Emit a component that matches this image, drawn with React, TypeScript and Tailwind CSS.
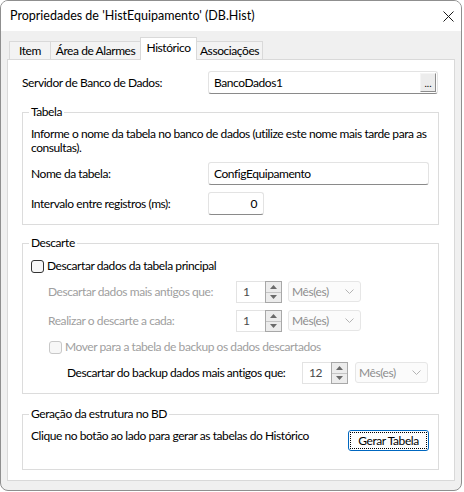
import React from "react";

function Spin({ value }: { value: string }) {
  return (
    <div className="flex w-[46px] h-[22px]">
      <div className="flex-1 bg-white border border-r-0 border-[#e3e3e3] pl-[6px] leading-[20px] text-[#4a4a4a]">{value}</div>
      <div className="w-[17px] flex flex-col border border-[#a8a8a8] bg-[#ececec]">
        <div className="flex-1 flex items-center justify-center border-b border-[#c4c4c4]">
          <svg width="7" height="4" viewBox="0 0 7 4"><path d="M0 4 L3.5 0 L7 4 Z" fill="#6a6a6a" /></svg>
        </div>
        <div className="flex-1 flex items-center justify-center">
          <svg width="7" height="4" viewBox="0 0 7 4"><path d="M0 0 L3.5 4 L7 0 Z" fill="#6a6a6a" /></svg>
        </div>
      </div>
    </div>
  );
}

function Combo() {
  return (
    <div className="w-[73px] h-[21px] border border-[#e6e6e6] bg-[#fbfbfb] rounded-[3px] flex items-center justify-between pl-[3px] pr-[6px]">
      <span className="text-[#8e8e8e] leading-[16px]">Mês(es)</span>
      <svg width="9" height="5" viewBox="0 0 9 5"><path d="M0.5 0.5 L4.5 4.5 L8.5 0.5" fill="none" stroke="#b4b4b4" strokeWidth="1" /></svg>
    </div>
  );
}

export default function App() {
  const field = "bg-white border border-[#e3e3e3] border-b-[#8a8a8a] rounded-[3px]";
  return (
    <div className="w-[464px] h-[492px] bg-white font-['Lato',sans-serif] text-[12px] tracking-[-0.43px] leading-[16px] text-black whitespace-nowrap">
      <div className="w-[462px] h-[491px] border border-[#8f8f8f] rounded-[8px] overflow-hidden bg-[#f0f0f0] flex flex-col">
        <div className="h-[30px] shrink-0 bg-white flex items-center justify-between pl-[9px] pr-[7px]">
          <span className="text-[12.5px] tracking-normal">Propriedades de 'HistEquipamento' (DB.Hist)</span>
          <svg width="11" height="11" viewBox="0 0 11 11">
            <path d="M0.5 0.5 L10.5 10.5 M10.5 0.5 L0.5 10.5" stroke="#1a1a1a" strokeWidth="1" />
          </svg>
        </div>
        <div className="flex-1 px-[6px] pt-[6px]">
          <div className="flex items-end pl-[2px] h-[22px]">
            <div className="w-[42px] h-[18px] flex items-center justify-center border border-b-0 border-[#d9d9d9] bg-[#f3f3f3]">Item</div>
            <div className="w-[91px] h-[18px] -ml-px flex items-center justify-center border border-b-0 border-[#d9d9d9] bg-[#f3f3f3]">Área de Alarmes</div>
            <div className="relative z-10 w-[57px] h-[23px] -ml-px -mb-px flex items-start justify-center pt-[2px] border border-b-0 border-[#d9d9d9] bg-white">Histórico</div>
            <div className="w-[67px] h-[18px] -ml-px flex items-center justify-center border border-b-0 border-[#d9d9d9] bg-[#f3f3f3]">Associações</div>
          </div>
          <div className="h-[422px] bg-white border border-[#d9d9d9] pl-[14px] pr-[15px] pt-[11px]">
            <div className="flex items-center h-[23px]">
              <div className="w-[186px]">Servidor de Banco de Dados:</div>
              <div className={`w-[230px] h-[23px] ${field} flex items-center justify-between pl-[5px] pr-[1px]`}>
                <span>BancoDados1</span>
                <div className="w-[16px] h-[19px] border border-[#f4f4f4] border-r-[#8c8c8c] border-b-[#8c8c8c] bg-[#ececec] flex items-end justify-center text-[10px] tracking-normal leading-[12px] pb-[2px]">...</div>
              </div>
            </div>

            <fieldset className="mt-[10px] border border-[#dcdcdc] px-[8px] pt-[7px] pb-[9px]">
              <legend className="-ml-[2px] px-[2px] leading-[16px]">Tabela</legend>
              <div className="leading-[14px]">
                Informe o nome da tabela no banco de dados (utilize este nome mais tarde para as
                <br />
                consultas).
              </div>
              <div className="flex items-center mt-[7px] h-[23px]">
                <div className="w-[177px]">Nome da tabela:</div>
                <div className={`w-[221px] h-[23px] ${field} flex items-center pl-[5px]`}>ConfigEquipamento</div>
              </div>
              <div className="flex items-center mt-[7px] h-[23px]">
                <div className="w-[177px]">Intervalo entre registros (ms):</div>
                <div className={`w-[56px] h-[23px] ${field} flex items-center justify-end pr-[6px]`}>0</div>
              </div>
            </fieldset>

            <fieldset className="mt-[10px] border border-[#dcdcdc] px-[8px] pt-[7px] pb-[9px]">
              <legend className="-ml-[2px] px-[2px] leading-[16px]">Descarte</legend>
              <div className="flex items-center h-[16px]">
                <div className="w-[13px] h-[13px] border border-[#333333] rounded-[3px] bg-[#f7f7f7]" />
                <span className="ml-[3px]">Descartar dados da tabela principal</span>
              </div>
              <div className="flex items-start mt-[7px] h-[22px]">
                <div className="w-[205px] pl-[17px] h-[22px] flex items-center text-[#a0a0a0]">Descartar dados mais antigos que:</div>
                <Spin value="1" />
                <div className="ml-[6px]"><Combo /></div>
              </div>
              <div className="flex items-start mt-[7px] h-[22px]">
                <div className="w-[205px] pl-[17px] h-[22px] flex items-center text-[#a0a0a0]">Realizar o descarte a cada:</div>
                <Spin value="1" />
                <div className="ml-[6px]"><Combo /></div>
              </div>
              <div className="flex items-center mt-[7px] h-[16px] pl-[18px]">
                <div className="w-[13px] h-[13px] border border-[#c8c8c8] rounded-[3px] bg-[#f7f7f7]" />
                <span className="ml-[3px] text-[#a0a0a0]">Mover para a tabela de backup os dados descartados</span>
              </div>
              <div className="flex items-start mt-[7px] h-[22px]">
                <div className="w-[271px] pl-[36px] h-[22px] flex items-center">Descartar do backup dados mais antigos que:</div>
                <Spin value="12" />
                <div className="ml-[7px]"><Combo /></div>
              </div>
            </fieldset>

            <fieldset className="mt-[12px] border border-[#dcdcdc] pl-[8px] pr-[9px] pt-[6px] pb-[18px]">
              <legend className="-ml-[2px] px-[2px] leading-[16px]">Geração da estrutura no BD</legend>
              <div className="flex items-start justify-between">
                <div>Clique no botão ao lado para gerar as tabelas do Histórico</div>
                <button className="mt-[2px] w-[81px] h-[21px] border border-[#0067c0] rounded-[3px] bg-[#fdfdfd] p-[1px]">
                  <div className="w-full h-full border border-dotted border-black flex items-center justify-center leading-[16px]">Gerar Tabela</div>
                </button>
              </div>
            </fieldset>
          </div>
        </div>
      </div>
    </div>
  );
}
